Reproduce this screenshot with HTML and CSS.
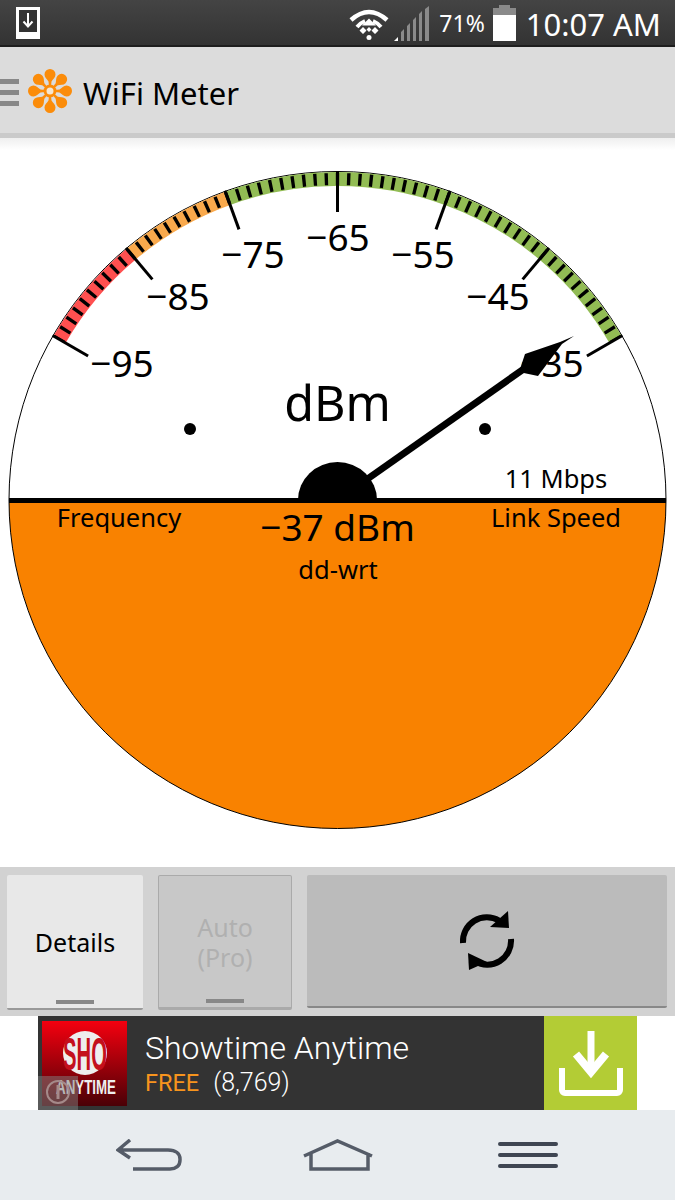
FILE: index.html
```html
<!DOCTYPE html>
<html lang="en">
<head>
  <meta charset="UTF-8" />
  <meta name="viewport" content="width=device-width, initial-scale=1.0"/>
  <title>WiFi Meter</title>
  <link rel="stylesheet" href="styles.css">
</head>
<body>
  <div class="phone">

    <div class="status-bar">
      <svg class="status-dl" viewBox="0 0 24 32" width="24" height="32">
        <rect x="0" y="0" width="24" height="32" fill="#fff"/>
        <rect x="3" y="3" width="18" height="22" fill="#333"/>
        <path d="M12 6v13M7.500 14.500l4.500 5 4.500-5" fill="none" stroke="#fff" stroke-width="2"/>
      </svg>
      <svg class="status-wifi" viewBox="0 0 42 34" width="42" height="34">
        <path d="M3 13Q21 -3 39 13" fill="none" stroke="#fff" stroke-width="4.500"/>
        <path d="M9 20Q13 15.500 17 14M33 20Q29 15.500 25 14" fill="none" stroke="#fff" stroke-width="4"/>
        <path d="M21 11.500L28 18.500H14z" fill="#fff"/>
        <path d="M15 20l3.500 3.500-3.500 3.500-3.500-3.500zM27 20l3.500 3.500-3.500 3.500-3.500-3.500zM21 20l2.500 2.500-2.500 2.500-2.500-2.500z" fill="#fff"/>
        <circle cx="21" cy="30.500" r="2.500" fill="#fff"/>
      </svg>
      <svg class="status-signal" viewBox="0 0 36 36" width="36" height="36">
        <path d="M7 35V26l3-3v12zM13 35V20l3-3v18zM19 35V14l3-3v24zM25 35V8l3-3v30zM31 35V3l4-3v35z" fill="#8a8a8a"/>
        <path d="M0 35l4-4v4z" fill="#fff"/>
      </svg>
      <span class="status-pct">71%</span>
      <svg class="status-batt" viewBox="0 0 23 36" width="23" height="36">
        <path d="M6 0h11v3h6v7H0V3h6z" fill="#8a8a8a"/>
        <rect x="0" y="10" width="23" height="26" fill="#fff"/>
      </svg>
      <span class="status-time">10:07 AM</span>
    </div>

    <div class="app-bar">
      <div class="app-menu"><i></i><i></i><i></i></div>
      <svg class="app-logo" viewBox="0 0 46 46" width="46" height="46">
        <g fill="#fb8c0a">
          <path id="petal" d="M17.500 6.500a5.500 5.500 0 0 1 11 0c0 3-2.500 4.500-4 7L24 18H22l-.5-4.500c-1.500-2.500-4-4-4-7z"/>
          <use href="#petal" transform="rotate(45 23 23)"/>
          <use href="#petal" transform="rotate(90 23 23)"/>
          <use href="#petal" transform="rotate(135 23 23)"/>
          <use href="#petal" transform="rotate(180 23 23)"/>
          <use href="#petal" transform="rotate(225 23 23)"/>
          <use href="#petal" transform="rotate(270 23 23)"/>
          <use href="#petal" transform="rotate(315 23 23)"/>
        </g>
        <circle cx="23" cy="23" r="5" fill="#f5e6d0" stroke="#fb8c0a" stroke-width="3"/>
      </svg>
      <span class="app-title">WiFi Meter</span>
    </div>

    <div class="gauge">
      <svg class="dial" viewBox="0 138 675 729" width="675" height="729">
        <path d="M9 500a328.500 328.500 0 0 1 657 0z" fill="#fff"/>
        <path d="M9 500a328.500 328.500 0 0 0 657 0z" fill="#f98200"/>
        <circle cx="337.500" cy="500" r="328.500" fill="none" stroke="#000" stroke-width="1"/>

        <!-- coloured band, -60 to 60 degrees at r=321 -->
        <g fill="none" stroke-width="14">
          <path d="M59.500 339.500A321 321 0 0 1 131.200 254.100" stroke="#ff5050"/>
          <path d="M131.200 254.100A321 321 0 0 1 227.700 198.400" stroke="#f9a94c"/>
          <path d="M227.700 198.400A321 321 0 0 1 615.500 339.500" stroke="#92bc54"/>
          <path d="M59.500 339.500A321 321 0 0 1 615.500 339.500" stroke="#000" stroke-width="12" pathLength="120" stroke-dasharray="0.6 1.4" stroke-dashoffset="0.3"/>
        </g>

        <g stroke="#000" stroke-width="3">
          <line x1="337.500" y1="171" x2="337.500" y2="212" transform="rotate(-60 337.500 500)"/>
          <line x1="337.500" y1="171" x2="337.500" y2="212" transform="rotate(-40 337.500 500)"/>
          <line x1="337.500" y1="171" x2="337.500" y2="212" transform="rotate(-20 337.500 500)"/>
          <line x1="337.500" y1="171" x2="337.500" y2="212"/>
          <line x1="337.500" y1="171" x2="337.500" y2="212" transform="rotate(20 337.500 500)"/>
          <line x1="337.500" y1="171" x2="337.500" y2="212" transform="rotate(40 337.500 500)"/>
          <line x1="337.500" y1="171" x2="337.500" y2="212" transform="rotate(60 337.500 500)"/>
        </g>

        <text class="scale" x="122" y="377">−95</text>
        <text class="scale" x="178" y="310">−85</text>
        <text class="scale" x="253" y="268">−75</text>
        <text class="scale" x="338" y="251">−65</text>
        <text class="scale" x="423" y="268">−55</text>
        <text class="scale" x="498" y="310">−45</text>
        <text class="scale" x="552" y="377">−35</text>

        <text class="unit" x="337.500" y="421">dBm</text>
        <circle cx="190" cy="429" r="6"/>
        <circle cx="485" cy="429" r="6"/>

        <text class="small" x="556" y="488">11 Mbps</text>
        <text class="small" x="119" y="527">Frequency</text>
        <text class="small" x="556" y="527">Link Speed</text>
        <text class="reading" x="337.500" y="541">−37 dBm</text>
        <text class="small" x="338" y="579">dd-wrt</text>

        <!-- needle -->
        <line x1="337.500" y1="500" x2="528" y2="366" stroke="#000" stroke-width="7"/>
        <path d="M574 336L562 344L538 376L519 372L525 354L560 342z" fill="#000"/>
        <rect x="9" y="498" width="657" height="5" fill="#000"/>
        <path d="M298 500A39.500 38 0 0 1 377 500z" fill="#000"/>
      </svg>
    </div>

    <div class="buttons">
      <div class="btn btn-on">Details<i class="btn-mark"></i></div>
      <div class="btn btn-off">Auto<br>(Pro)<i class="btn-mark"></i></div>
      <div class="btn btn-refresh">
        <svg viewBox="0 0 56 60" width="56" height="60">
          <path d="M4 32A24 24 0 0 1 40 9.500" fill="none" stroke="#000" stroke-width="6"/>
          <path d="M49 0L50 17L31 16z" fill="#000"/>
          <path d="M52 28A24 24 0 0 1 16 50.500" fill="none" stroke="#000" stroke-width="6"/>
          <path d="M10 59L9 42L28 51z" fill="#000"/>
        </svg>
      </div>
    </div>

    <div class="ad-row">
      <div class="ad">
        <svg class="ad-logo" viewBox="0 0 85 85" width="85" height="85">
          <defs>
            <linearGradient id="shoBg" x1="0" y1="0" x2="0" y2="1">
              <stop offset="0" stop-color="#f5000f"/>
              <stop offset="1" stop-color="#4a0006"/>
            </linearGradient>
          </defs>
          <rect width="85" height="85" fill="url(#shoBg)"/>
          <circle cx="43" cy="32" r="22" fill="#eee"/>
          <text class="sho" transform="translate(43 49) scale(.44 1)">SHO</text>
          <text class="anytime" transform="translate(44 73) scale(.667 1)">ANYTIME</text>
        </svg>
        <div class="ad-text">
          <div class="ad-name">Showtime Anytime</div>
          <div class="ad-meta"><span class="ad-free">FREE</span><span class="ad-count">(8,769)</span></div>
        </div>
        <div class="ad-get">
          <svg viewBox="0 0 64 66" width="64" height="66">
            <path d="M32 1V36" stroke="#fff" stroke-width="7" fill="none"/>
            <path d="M17 24L32 42L47 24" stroke="#fff" stroke-width="8" fill="none"/>
            <path d="M3 38V60a3 3 0 0 0 3 3H58a3 3 0 0 0 3-3V38" stroke="#fff" stroke-width="6" fill="none"/>
          </svg>
        </div>
        <div class="ad-info">
          <svg viewBox="0 0 40 34" width="40" height="34">
            <circle cx="20" cy="16" r="11" fill="none" stroke="#a58a8a" stroke-width="2"/>
            <path d="M20 9v14" stroke="#a58a8a" stroke-width="3"/>
          </svg>
        </div>
      </div>
    </div>

    <div class="nav-bar">
      <svg viewBox="0 0 66 32" width="66" height="32">
        <path d="M14 1L2 11L14 19M2 11H52C60 11 64 15 64 20V21C64 27 60 30 54 30H17" fill="none" stroke="#555c68" stroke-width="3.500"/>
      </svg>
      <svg viewBox="0 0 72 32" width="72" height="32">
        <path d="M2 17L35.500 2L70 17M9 14V30H66V14" fill="none" stroke="#555c68" stroke-width="3.500"/>
      </svg>
      <svg viewBox="0 0 60 28" width="60" height="28">
        <path d="M2 3H58M2 14H58M2 25H58" fill="none" stroke="#3f4652" stroke-width="4" stroke-linecap="round"/>
      </svg>
    </div>

  </div>
</body>
</html>
```

FILE: styles.css
```css
* {
  box-sizing: border-box;
}
body {
  margin: 0;
  background-color: #fff;
  font-family: "Noto Sans", sans-serif;
}
.phone {
  width: 675px;
  height: 1200px;
  display: flex;
  flex-direction: column;
  overflow: hidden;
}

/* status bar */
.status-bar {
  height: 47px;
  display: flex;
  align-items: center;
  background: linear-gradient(#444, #333);
  border-bottom: 2px solid #1e1e1e;
  color: #fff;
  padding-right: 14px;
}
.status-dl {
  margin-left: 16px;
  margin-right: auto;
}
.status-wifi {
  margin-top: 2px;
}
.status-signal {
  margin-left: 4px;
  margin-top: 2px;
}
.status-pct {
  font-size: 23px;
  margin-left: 9px;
  margin-top: 1px;
}
.status-batt {
  margin-left: 8px;
}
.status-time {
  font-size: 31px;
  margin-left: 10px;
  margin-top: 2px;
}

/* action bar */
.app-bar {
  height: 91px;
  display: flex;
  align-items: center;
  background-color: #dcdcdc;
  border-bottom: 5px solid #cacaca;
  padding-top: 2px;
}
.app-menu {
  width: 19px;
  display: flex;
  flex-direction: column;
  gap: 6px;
  margin-top: 3px;
}
.app-menu i {
  display: block;
  height: 5px;
  background-color: #888;
}
.app-logo {
  margin-left: 8px;
}
.app-title {
  font-size: 31px;
  color: #000;
  margin-left: 10px;
  margin-top: 4px;
}

/* gauge */
.gauge {
  flex: 1;
  background: linear-gradient(#efefef, #fff) no-repeat 0 0 / 100% 12px;
}
.dial {
  display: block;
}
.dial text {
  text-anchor: middle;
  fill: #000;
}
.scale {
  font-size: 37px;
}
.unit {
  font-size: 48.500px;
}
.reading {
  font-size: 37px;
}
.small {
  font-size: 25.500px;
}

/* buttons */
.buttons {
  height: 149px;
  display: grid;
  grid-template-columns: 136px 134px 360px;
  gap: 15px;
  padding: 8px 7px 6px;
  background-color: #d2d2d2;
}
.btn {
  position: relative;
  display: flex;
  align-items: center;
  justify-content: center;
  text-align: center;
  font-size: 25px;
  line-height: 30px;
  border-radius: 2px;
}
.btn-on {
  background-color: #e8e8e8;
  border-bottom: 2px solid #999;
  color: #000;
}
.btn-off {
  background-color: #c8c8c8;
  border: 1px solid #aaa;
  border-bottom-width: 3px;
  color: #b0b0b0;
}
.btn-refresh {
  background-color: #bbb;
  border-bottom: 2px solid #888;
  height: 133px;
}
.btn-mark {
  position: absolute;
  left: 50%;
  bottom: 4px;
  width: 38px;
  height: 4px;
  margin-left: -19px;
  background-color: #888;
}

/* ad */
.ad-row {
  height: 94px;
  padding: 0 38px;
  background-color: #fff;
}
.ad {
  position: relative;
  height: 94px;
  display: flex;
  align-items: center;
  background-color: #333;
  color: #fff;
  padding-left: 4px;
}
.ad-logo {
  flex: none;
}
.sho {
  font-family: "Liberation Sans", sans-serif;
  font-weight: bold;
  font-size: 46px;
  text-anchor: middle;
  fill: #c4101c;
}
.anytime {
  font-family: "Liberation Sans", sans-serif;
  font-weight: bold;
  font-size: 20px;
  text-anchor: middle;
  fill: #eee;
}
.ad-text {
  flex: 1;
  margin-left: 18px;
}
.ad-name {
  font-family: Roboto, sans-serif;
  font-weight: 300;
  font-size: 32px;
  line-height: 40px;
}
.ad-meta {
  font-family: Roboto, sans-serif;
  font-weight: 300;
  font-size: 25px;
  line-height: 30px;
}
.ad-free {
  color: #f7941d;
  font-weight: 400;
  font-size: 23.500px;
  margin-right: 14px;
}
.ad-get {
  width: 93px;
  height: 94px;
  display: flex;
  align-items: center;
  justify-content: center;
  background-color: #b3cc35;
}
.ad-info {
  position: absolute;
  left: 0;
  bottom: 0;
  width: 40px;
  height: 34px;
  background-color: rgba(130, 130, 130, 0.5);
}
.ad-info svg {
  display: block;
}

/* nav */
.nav-bar {
  height: 90px;
  display: grid;
  grid-template-columns: 116px 66px 120px 72px 124px 60px;
  align-items: center;
  background-color: #e8ecef;
}
.nav-bar svg:nth-child(1) {
  grid-column: 2;
}
.nav-bar svg:nth-child(2) {
  grid-column: 4;
}
.nav-bar svg:nth-child(3) {
  grid-column: 6;
}
```
